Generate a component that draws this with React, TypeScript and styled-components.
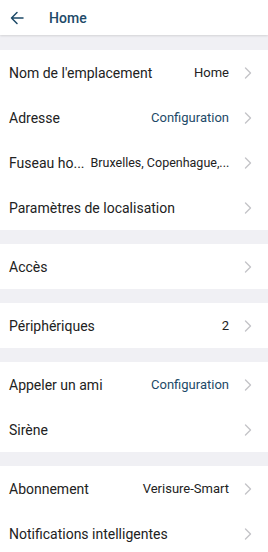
import styled, { createGlobalStyle } from 'styled-components';

const GlobalStyle = createGlobalStyle`
  html, body {
    margin: 0;
    padding: 0;
    background: #f0f0f4;
    font-family: Roboto, "Liberation Sans", sans-serif;
  }
  * { box-sizing: border-box; }
`;

const Screen = styled.div`
  width: 268px;
  height: 552px;
  overflow: hidden;
  background: #f0f0f4;
  display: flex;
  flex-direction: column;
`;

const Header = styled.header`
  height: 35px;
  flex-shrink: 0;
  background: #ffffff;
  display: flex;
  align-items: center;
  padding-left: 9px;
  box-shadow: 0 1px 2px rgba(0, 0, 0, 0.12);
  position: relative;
  z-index: 1;
`;

const BackButton = styled.button`
  background: none;
  border: none;
  padding: 0;
  width: 16px;
  height: 16px;
  display: flex;
  align-items: center;
  justify-content: center;
  color: #1d4a68;
  margin-right: 24px;
`;

const Title = styled.h1`
  margin: 0;
  font-size: 14px;
  font-weight: 500;
  color: #1d4a68;
  letter-spacing: 0.1px;
`;

const Content = styled.div`
  display: flex;
  flex-direction: column;
  gap: 14px;
  padding-top: 15px;
`;

const Group = styled.section`
  background: #ffffff;
  display: flex;
  flex-direction: column;
`;

const Row = styled.div`
  height: 45px;
  display: flex;
  align-items: center;
  padding: 0 16px 0 9px;
  gap: 6px;
`;

const Label = styled.span`
  font-size: 14px;
  color: #222222;
  white-space: nowrap;
  flex: 1 1 auto;
`;

const Value = styled.span<{ $link?: boolean; $small?: boolean }>`
  flex: 0 0 auto;
  font-size: ${p => (p.$small ? '12.5px' : '13px')};
  color: ${p => (p.$link ? '#1d4a68' : '#222222')};
  white-space: nowrap;
`;

const Chevron = styled.span`
  flex-shrink: 0;
  width: 8px;
  height: 12px;
  margin-left: 9px;
  display: flex;
  align-items: center;
  color: #c4c4c8;
`;

type Item = {
  label: string;
  value?: string;
  link?: boolean;
  small?: boolean;
};

const groups: Item[][] = [
  [
    { label: "Nom de l'emplacement", value: 'Home' },
    { label: 'Adresse', value: 'Configuration', link: true },
    { label: 'Fuseau ho...', value: 'Bruxelles, Copenhague,...', small: true },
    { label: 'Paramètres de localisation' },
  ],
  [{ label: 'Accès' }],
  [{ label: 'Périphériques', value: '2' }],
  [
    { label: 'Appeler un ami', value: 'Configuration', link: true },
    { label: 'Sirène' },
  ],
  [
    { label: 'Abonnement', value: 'Verisure-Smart' },
    { label: 'Notifications intelligentes' },
  ],
];

function ChevronIcon() {
  return (
    <svg width="8" height="12" viewBox="0 0 8 12" fill="none">
      <path d="M1.5 1L6.5 6L1.5 11" stroke="currentColor" strokeWidth="1.4" strokeLinecap="round" strokeLinejoin="round" />
    </svg>
  );
}

export default function App() {
  return (
    <>
      <GlobalStyle />
      <Screen>
        <Header>
          <BackButton aria-label="Retour">
            <svg width="14" height="14" viewBox="0 0 14 14" fill="none">
              <path d="M13 7H1.5M7 1.5L1.5 7L7 12.5" stroke="currentColor" strokeWidth="1.5" strokeLinecap="round" strokeLinejoin="round" />
            </svg>
          </BackButton>
          <Title>Home</Title>
        </Header>
        <Content>
          {groups.map((group, gi) => (
            <Group key={gi}>
              {group.map(item => (
                <Row key={item.label}>
                  <Label>{item.label}</Label>
                  {item.value && (
                    <Value $link={item.link} $small={item.small}>
                      {item.value}
                    </Value>
                  )}
                  <Chevron>
                    <ChevronIcon />
                  </Chevron>
                </Row>
              ))}
            </Group>
          ))}
        </Content>
      </Screen>
    </>
  );
}
